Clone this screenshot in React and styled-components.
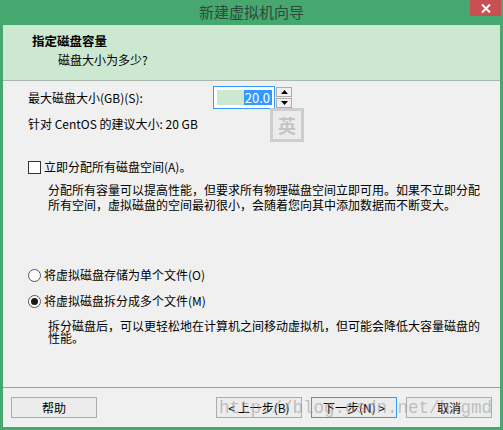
import React from "react";
import styled, { createGlobalStyle } from "styled-components";

const Global = createGlobalStyle`
  html, body { margin: 0; padding: 0; background: #46a86e; }
  body { font-family: "Noto Sans CJK SC", "Noto Sans", sans-serif; font-size: 12px; color: #000; }
  * { box-sizing: border-box; }
`;

const Window = styled.div`
  position: relative;
  width: 503px;
  height: 430px;
  background: #46a86e;
  display: flex;
  flex-direction: column;
  overflow: hidden;
`;

const TitleBar = styled.div`
  height: 25px;
  flex: none;
  display: grid;
  grid-template-columns: 1fr auto 1fr;
  align-items: start;
`;

const Title = styled.div`
  grid-column: 2;
  font-size: 15px;
  line-height: 24px;
  color: #2e4a3a;
`;

const CloseBtn = styled.div`
  grid-column: 3;
  justify-self: end;
  width: 31px;
  height: 16px;
  margin-right: 2px;
  background: #c75050;
  display: flex;
  align-items: center;
  justify-content: center;
`;

const Body = styled.div`
  flex: 1;
  margin: 0 3px 3px 3px;
  background: #f0f0f0;
  display: flex;
  flex-direction: column;
`;

const Header = styled.div`
  height: 56px;
  flex: none;
  background: #cce8d0;
  border-bottom: 1px solid #a8b8ac;
  padding: 7px 0 0 29px;
`;

const HeaderTitle = styled.div`
  font-weight: bold;
  font-size: 12.5px;
  line-height: 17px;
`;

const HeaderSub = styled.div`
  padding-left: 26px;
  line-height: 16px;
  margin-top: 3px;
`;

const Content = styled.div`
  padding: 5px 0 0 25px;
  display: flex;
  flex-direction: column;
`;

const SizeRow = styled.div`
  display: flex;
  align-items: center;
  height: 23px;
`;

const SizeLabel = styled.div`
  width: 185px;
  line-height: 16px;
  padding-top: 1px;
`;

const Input = styled.div`
  width: 62px;
  height: 23px;
  border: 1px solid #3399ff;
  background: #fff;
  padding: 3px 2px 3px 3px;
  display: flex;
`;

const InputFill = styled.div`
  flex: 1;
  background: #cde8d1;
`;

const Selected = styled.div`
  background: #3399ff;
  color: #fff;
  font-size: 13px;
  line-height: 15px;
  padding: 0 1px;
  border-right: 1.5px solid #e06a10;
`;

const Spinner = styled.div`
  margin-left: 1px;
  width: 16px;
  height: 21px;
  display: flex;
  flex-direction: column;
  gap: 1px;
`;

const SpinBtn = styled.div`
  flex: 1;
  border: 1px solid #acacac;
  background: #f0f0f0;
  display: flex;
  align-items: center;
  justify-content: center;
`;

const Line = styled.div`
  line-height: 16px;
  margin-top: ${(p) => p.$mt || 0}px;
`;

const OptionRow = styled.label`
  display: flex;
  align-items: center;
  gap: 3px;
  line-height: 16px;
  margin-top: ${(p) => p.$mt || 0}px;
`;

const CheckBox = styled.span`
  width: 13px;
  height: 13px;
  border: 1px solid #333;
  background: #fff;
  flex: none;
`;

const Radio = styled.span`
  width: 13px;
  height: 13px;
  border-radius: 50%;
  border: 1px solid #555;
  background: #fff;
  flex: none;
  display: flex;
  align-items: center;
  justify-content: center;
  &::after {
    content: "";
    width: 7px;
    height: 7px;
    border-radius: 50%;
    background: ${(p) => (p.$checked ? "#1a1a1a" : "transparent")};
  }
`;

const Para = styled.div`
  margin: ${(p) => p.$mt || 0}px 0 0 20px;
  line-height: ${(p) => p.$lh || 15}px;
`;

const Footer = styled.div`
  margin-top: auto;
  border-top: 1px solid #a0a0a0;
  padding: 9px 8px 9px 8px;
  display: flex;
  gap: 9px;
`;

const Spacer = styled.div`
  flex: 1;
`;

const Button = styled.div`
  width: 86px;
  height: 21px;
  border: 1px solid ${(p) => (p.$default ? "#3399ff" : "#acacac")};
  background: #ececec;
  display: flex;
  align-items: center;
  justify-content: center;
  line-height: 16px;
`;

const Watermark = styled.div`
  position: absolute;
  left: 219px;
  top: 398px;
  font-family: "Liberation Mono", monospace;
  font-size: 17.5px;
  line-height: 20px;
  color: rgba(150, 150, 150, 0.55);
  pointer-events: none;
  white-space: nowrap;
`;

const Ime = styled.div`
  position: absolute;
  left: 270px;
  top: 108px;
  width: 34px;
  height: 34px;
  border: 3px solid rgba(200, 200, 200, 0.85);
  background: rgba(232, 232, 232, 0.7);
  display: flex;
  align-items: center;
  justify-content: center;
  font-size: 18px;
  font-weight: bold;
  color: #c4c4c4;
`;

const Arrow = ({ up }) => (
  <svg width="7" height="4" viewBox="0 0 7 4">
    <path d={up ? "M0 4 L3.5 0 L7 4 Z" : "M0 0 L3.5 4 L7 0 Z"} fill="#000" />
  </svg>
);

export default function App() {
  return (
    <>
      <Global />
      <Window>
        <TitleBar>
          <Title>新建虚拟机向导</Title>
          <CloseBtn>
            <svg width="10" height="9" viewBox="0 0 10 9">
              <path d="M1 0.5 L9 8.5 M9 0.5 L1 8.5" stroke="#fff" strokeWidth="2" />
            </svg>
          </CloseBtn>
        </TitleBar>
        <Body>
          <Header>
            <HeaderTitle>指定磁盘容量</HeaderTitle>
            <HeaderSub>磁盘大小为多少?</HeaderSub>
          </Header>
          <Content>
            <SizeRow>
              <SizeLabel>最大磁盘大小(GB)(S):</SizeLabel>
              <Input>
                <InputFill />
                <Selected>20.0</Selected>
              </Input>
              <Spinner>
                <SpinBtn><Arrow up /></SpinBtn>
                <SpinBtn><Arrow /></SpinBtn>
              </Spinner>
            </SizeRow>
            <Line $mt={7}>针对 CentOS 的建议大小: 20 GB</Line>
            <OptionRow $mt={27}>
              <CheckBox />
              立即分配所有磁盘空间(A)。
            </OptionRow>
            <Para $mt={7} $lh={15}>
              分配所有容量可以提高性能，但要求所有物理磁盘空间立即可用。如果不立即分配
              <br />
              所有空间，虚拟磁盘的空间最初很小，会随着您向其中添加数据而不断变大。
            </Para>
            <OptionRow $mt={55}>
              <Radio />
              将虚拟磁盘存储为单个文件(O)
            </OptionRow>
            <OptionRow $mt={10}>
              <Radio $checked />
              将虚拟磁盘拆分成多个文件(M)
            </OptionRow>
            <Para $mt={11} $lh={12}>
              拆分磁盘后，可以更轻松地在计算机之间移动虚拟机，但可能会降低大容量磁盘的
              <br />
              性能。
            </Para>
          </Content>
          <Footer>
            <Button>帮助</Button>
            <Spacer />
            <Button>&lt; 上一步(B)</Button>
            <Button $default>下一步(N) &gt;</Button>
            <Button>取消</Button>
          </Footer>
        </Body>
        <Ime>英</Ime>
        <Watermark>http://blog.csdn.net/hxgmd</Watermark>
      </Window>
    </>
  );
}
